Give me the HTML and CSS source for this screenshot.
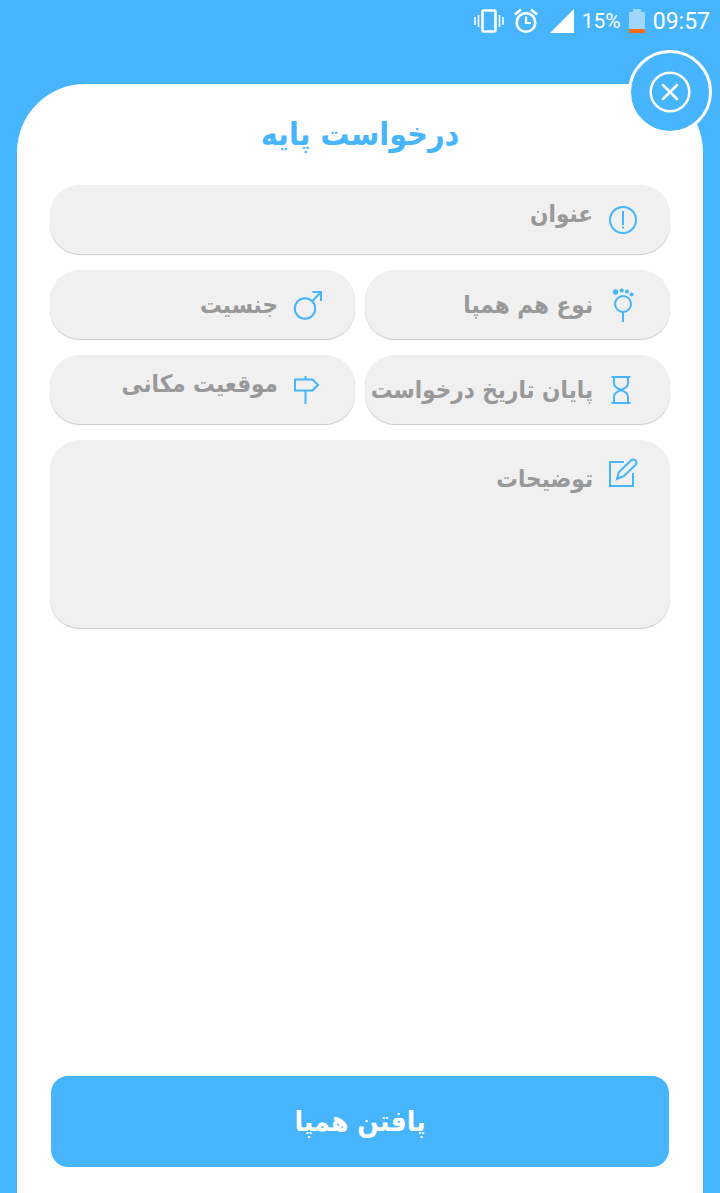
FILE: index.html
```html
<!DOCTYPE html>
<html lang="fa" dir="rtl">
<head>
<meta charset="utf-8">
<meta name="viewport" content="width=device-width, initial-scale=1">
<title>درخواست پایه</title>
<link rel="stylesheet" href="styles.css">
</head>
<body>
<header class="status" dir="ltr">
  <svg class="status-icon" width="30" height="26" viewBox="0 0 30 26" fill="none" stroke="currentColor" aria-hidden="true">
    <rect x="8.500" y="2.500" width="13" height="21" rx="1" stroke-width="2.600"/>
    <path d="M1 9v8M4.500 7v12M25.500 7v12M29 9v8" stroke-width="1.600"/>
  </svg>
  <svg class="status-icon alarm" width="24" height="26" viewBox="0 0 24 26" fill="none" stroke="currentColor" aria-hidden="true">
    <circle cx="12" cy="14.500" r="9.300" stroke-width="2.600"/>
    <path d="M12 8.500v6.500h5" stroke-width="2.200"/>
    <path d="M1 6.500l6-5M23 6.500l-6-5" stroke-width="2.600"/>
  </svg>
  <svg class="status-icon signal" width="24" height="24" viewBox="0 0 24 24" fill="currentColor" aria-hidden="true"><path d="M24 0v24H0z"/></svg>
  <span class="percent">15%</span>
  <svg class="status-icon battery" width="16" height="24" viewBox="0 0 16 24" aria-hidden="true">
    <path d="M0 3h4V0h8v3h4v17H0z" fill="#a0d6fc"/><path d="M0 20h16v4H0z" fill="#fc6a0a"/>
  </svg>
  <span class="clock">09:57</span>
</header>

<main class="sheet">
  <button class="close" type="button" aria-label="بستن">
    <svg width="42" height="42" viewBox="0 0 42 42" fill="none" stroke="currentColor" stroke-width="2.500" stroke-linecap="round" aria-hidden="true">
      <circle cx="21" cy="21" r="19.300"/><path d="M14 14l14 14M28 14L14 28"/>
    </svg>
  </button>
  <h1 class="title">درخواست پایه</h1>
  <form class="form">
    <div class="fields">
      <label class="field wide raised">
        <svg class="icon" viewBox="0 0 28 28" aria-hidden="true"><circle cx="14" cy="14" r="13"/><path d="M14 5v14M14 20.500v2"/></svg>
        <input class="control" type="text" placeholder="عنوان" aria-label="عنوان">
      </label>
      <button class="field" type="button">
        <svg class="icon tall" viewBox="0 0 28 34" aria-hidden="true"><circle cx="14" cy="16" r="8"/><path d="M14 24v10"/><g class="dots"><circle cx="6.500" cy="4" r="2.700"/><circle cx="12.700" cy="2.500" r="2.100"/><circle cx="18" cy="3.500" r="2"/><circle cx="22.500" cy="6.500" r="2"/></g></svg>
        <span class="control">نوع هم همپا</span>
      </button>
      <button class="field" type="button">
        <svg class="icon" viewBox="0 0 28 28" aria-hidden="true"><circle cx="11" cy="17.500" r="10.200"/><path d="M18 10.500l9-9.500M18.500 1H27v9"/></svg>
        <span class="control">جنسیت</span>
      </button>
      <button class="field" type="button">
        <svg class="icon" viewBox="0 0 28 28" aria-hidden="true"><path d="M2.500 1h19M2.500 27h19M5 1v6c0 4 3 5 7 7s7 3 7 7v6M19 1v6c0 4-3 5-7 7s-7 3-7 7v6"/></svg>
        <span class="control">پایان تاریخ درخواست</span>
      </button>
      <label class="field raised">
        <svg class="icon" viewBox="0 0 28 28" aria-hidden="true"><path d="M1 3.500h17.500L24 9l-5.500 5.500H1zM11.500 0v3.500M11.500 14.500V28"/></svg>
        <input class="control" type="text" placeholder="موقعیت مکانی" aria-label="موقعیت مکانی">
      </label>
      <label class="field wide note">
        <svg class="icon" viewBox="0 0 28 28" aria-hidden="true"><path d="M15 3H1v24h23V14M8 20l2-7L22 1.500a3 3 0 0 1 4.500 4.500L15 17z"/></svg>
        <textarea class="control" placeholder="توضیحات" aria-label="توضیحات"></textarea>
      </label>
    </div>
    <button class="submit" type="submit">پافتن همپا</button>
  </form>
</main>
</body>
</html>
```
FILE: styles.css
```css
* { box-sizing: border-box; }

body {
  margin: 0;
  min-height: 100vh;
  display: flex;
  flex-direction: column;
  background: #46b5fe;
  font-family: "DejaVu Sans Condensed", "DejaVu Sans", sans-serif;
}

button, input, textarea { font: inherit; }

.status {
  display: flex;
  align-items: center;
  justify-content: flex-end;
  height: 42px;
  padding: 0 10px;
  color: #fff;
  font-family: Roboto, sans-serif;
  gap: 8px;
}
.status-icon { flex: none; }
.alarm { margin-left: 2px; }
.signal { margin-left: 4px; }
.percent { font-size: 21px; }
.clock { font-size: 23px; }

.sheet {
  position: relative;
  flex: 1;
  display: flex;
  flex-direction: column;
  margin: 42px 17px 0;
  padding: 24px 33px 26px;
  background: #fff;
  border-radius: 68px 68px 0 0;
}

.close {
  position: absolute;
  top: -34px;
  right: -9px;
  width: 84px;
  height: 84px;
  display: grid;
  place-items: center;
  padding: 0;
  border: 3px solid #fff;
  border-radius: 50%;
  background: #46b5fe;
  color: #fff;
}

.title {
  margin: 0 0 25px;
  text-align: center;
  font-size: 32px;
  line-height: 52px;
  font-weight: bold;
  color: #46b5fe;
}

.form { flex: 1; display: flex; flex-direction: column; justify-content: space-between; }

.fields {
  display: grid;
  grid-template-columns: 1fr 1fr;
  gap: 16px 10px;
}

.field {
  display: flex;
  align-items: center;
  gap: 16px;
  min-width: 0;
  height: 69px;
  padding: 0 33px 0 0;
  border: 0;
  border-radius: 30px;
  background: #f0f0f0;
  box-shadow: 0 1px 1px #c8c8c8;
  font-size: 24px;
  font-weight: bold;
  color: #999;
}
.wide { grid-column: 1 / -1; }

.icon {
  flex: none;
  width: 28px;
  height: 28px;
  overflow: visible;
  fill: none;
  stroke: #46b5fe;
  stroke-width: 2;
}
.tall { height: 34px; }
.dots { fill: #46b5fe; stroke: none; }

.control {
  flex: 1;
  min-width: 0;
  padding: 0;
  border: 0;
  background: none;
  color: #999;
  text-align: right;
  white-space: nowrap;
  line-height: 40px;
  resize: none;
  outline: none;
}
.control::placeholder { color: #999; opacity: 1; }
.raised .control { height: 40px; margin-bottom: 12px; }

.note { height: 188px; align-items: flex-start; padding-top: 19px; }
.note .control { height: 160px; }

.submit {
  height: 91px;
  margin: 24px 1px 0;
  border: 0;
  border-radius: 17px;
  background: #46b5fe;
  color: #fff;
  font-size: 28px;
  font-weight: bold;
}
```
